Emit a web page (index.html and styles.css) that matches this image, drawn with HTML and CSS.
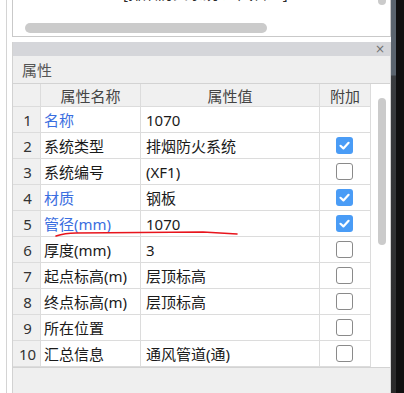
FILE: index.html
```html
<!DOCTYPE html>
<html lang="zh-CN">
<head>
    <meta charset="UTF-8">
    <meta name="viewport" content="width=device-width, initial-scale=1.0">
    <title>属性</title>
    <link rel="stylesheet" href="styles.css">
</head>
<body>
    <div class="screen">
        <div class="gutter"></div>

        <div class="main">
            <div class="top-panel">
                <div class="top-left">
                    <div class="cut-text">[排烟防火系统-通风管道]</div>
                    <div class="hthumb"></div>
                </div>
                <div class="vthumb-top"></div>
            </div>

            <div class="prop-panel">
                <div class="title-bar"><span class="close">×</span></div>
                <div class="prop-label">属性</div>

                <div class="grid-wrap">
                    <div class="grid">
                        <div class="row head">
                            <div class="cell num"></div>
                            <div class="cell center">属性名称</div>
                            <div class="cell center">属性值</div>
                            <div class="cell center">附加</div>
                        </div>
                        <div class="row">
                            <div class="cell num">1</div>
                            <div class="cell name blue">名称</div>
                            <div class="cell val">1070</div>
                            <div class="cell box"></div>
                        </div>
                        <div class="row">
                            <div class="cell num">2</div>
                            <div class="cell name">系统类型</div>
                            <div class="cell val">排烟防火系统</div>
                            <div class="cell box"><span class="check on"><svg viewBox="0 0 17 17"><path d="M4.5 8.8 L7.4 11.4 L12.6 5.8"/></svg></span></div>
                        </div>
                        <div class="row">
                            <div class="cell num">3</div>
                            <div class="cell name">系统编号</div>
                            <div class="cell val">(XF1)</div>
                            <div class="cell box"><span class="check"></span></div>
                        </div>
                        <div class="row">
                            <div class="cell num">4</div>
                            <div class="cell name blue">材质</div>
                            <div class="cell val">钢板</div>
                            <div class="cell box"><span class="check on"><svg viewBox="0 0 17 17"><path d="M4.5 8.8 L7.4 11.4 L12.6 5.8"/></svg></span></div>
                        </div>
                        <div class="row">
                            <div class="cell num">5</div>
                            <div class="cell name blue">管径(mm)</div>
                            <div class="cell val">1070</div>
                            <div class="cell box"><span class="check on"><svg viewBox="0 0 17 17"><path d="M4.5 8.8 L7.4 11.4 L12.6 5.8"/></svg></span></div>
                        </div>
                        <div class="row">
                            <div class="cell num">6</div>
                            <div class="cell name">厚度(mm)</div>
                            <div class="cell val">3</div>
                            <div class="cell box"><span class="check"></span></div>
                        </div>
                        <div class="row">
                            <div class="cell num">7</div>
                            <div class="cell name">起点标高(m)</div>
                            <div class="cell val">层顶标高</div>
                            <div class="cell box"><span class="check"></span></div>
                        </div>
                        <div class="row">
                            <div class="cell num">8</div>
                            <div class="cell name">终点标高(m)</div>
                            <div class="cell val">层顶标高</div>
                            <div class="cell box"><span class="check"></span></div>
                        </div>
                        <div class="row">
                            <div class="cell num">9</div>
                            <div class="cell name">所在位置</div>
                            <div class="cell val"></div>
                            <div class="cell box"><span class="check"></span></div>
                        </div>
                        <div class="row">
                            <div class="cell num">10</div>
                            <div class="cell name">汇总信息</div>
                            <div class="cell val">通风管道(通)</div>
                            <div class="cell box"><span class="check"></span></div>
                        </div>
                    </div>
                    <div class="vscroll"><div class="vthumb"></div></div>
                </div>

                <!-- hand-drawn red underline -->
                <svg class="mark" width="240" height="12" viewBox="0 0 240 12">
                    <path d="M43 7 Q52 4 63 4 L190 3 L224 5"/>
                </svg>
            </div>
        </div>

        <div class="edge">
            <div class="slate"></div>
            <div class="dark"></div>
        </div>
    </div>
</body>
</html>
```

FILE: styles.css
```css
* {
    box-sizing: border-box;
}

body {
    margin: 0;
    background-color: #ffffff;
    font-family: "Noto Sans", "Noto Sans CJK SC", sans-serif;
    font-size: 15px;
    color: #1a1a1a;
}

.screen {
    display: flex;
    width: 404px;
    height: 393px;
    overflow: hidden;
}

.gutter {
    width: 7px;
    margin-right: 5px;
    border-right: 1px solid #d4d4d4;
}

.main {
    width: 379px;
    display: flex;
    flex-direction: column;
}

.top-panel {
    height: 37px;
    display: flex;
    justify-content: space-between;
    background-color: #fff;
    border: 1px solid #c9c9c9;
    border-top: none;
}

.top-left {
    padding-left: 12px;
}

.cut-text {
    margin-top: -15px;
    padding-left: 98px;
    height: 16px;
    line-height: 16px;
    color: #2b2b2b;
    white-space: nowrap;
}

.hthumb {
    width: 242px;
    height: 10px;
    margin-top: 22px;
    border-radius: 5px;
    background-color: #cbcbcb;
}

.vthumb-top {
    width: 8px;
    height: 5px;
    margin-right: 4px;
    border-radius: 0 0 4px 4px;
    background-color: #cbcbcb;
}

.prop-panel {
    position: relative;
    flex: 1;
    margin-top: 5px;
    background-color: #efefef;
    border-left: 1px solid #d2d2d2;
    border-right: 1px solid #d2d2d2;
}

.title-bar {
    height: 14px;
    display: flex;
    justify-content: flex-end;
    align-items: center;
    padding-right: 5px;
    background-color: #d5d6da;
}

.close {
    font-family: "DejaVu Sans", sans-serif;
    font-size: 12px;
    line-height: 12px;
    color: #707070;
}

.prop-label {
    height: 28px;
    padding-left: 9px;
    line-height: 28px;
    font-family: "Noto Sans CJK SC", sans-serif;
    font-size: 15px;
    color: #555;
    border-bottom: 1px solid #d3d3d3;
}

.grid-wrap {
    display: flex;
    background-color: #fff;
    border-bottom: 1px solid #d3d3d3;
}

.grid {
    width: 358px;
}

.row {
    display: grid;
    grid-template-columns: 28px 100px 179px 51px;
    height: 26px;
    border-bottom: 1px solid #dcdcdc;
}

.row.head {
    height: 23px;
    background-color: #f0f0f0;
    color: #444;
}

.cell {
    display: flex;
    align-items: center;
    border-right: 1px solid #dcdcdc;
    white-space: nowrap;
}

.center {
    justify-content: center;
}

.num {
    justify-content: center;
    padding-left: 2px;
    background-color: #f0f0f0;
    color: #333;
}

.name {
    padding-left: 3px;
    font-family: "Noto Sans", "Noto Sans CJK SC", sans-serif;
}

.val {
    padding-left: 5px;
}

.blue {
    color: #3a6ee0;
}

.box {
    justify-content: center;
    padding-right: 2px;
}

.check {
    display: block;
    width: 17px;
    height: 17px;
    border: 1.5px solid #8a8a8a;
    border-radius: 3px;
    background-color: #fff;
}

.check.on {
    border: none;
    background-color: #4a9cf6;
}

.check svg {
    display: block;
    width: 17px;
    height: 17px;
}

.check svg path {
    fill: none;
    stroke: #fff;
    stroke-width: 2.2;
    stroke-linecap: round;
    stroke-linejoin: round;
}

.vscroll {
    width: 19px;
    padding-left: 7px;
    padding-top: 14px;
}

.vthumb {
    width: 8px;
    height: 147px;
    border-radius: 4px;
    background-color: #cbcbcb;
}

.mark {
    position: absolute;
    left: 0;
    top: 187px;
}

.mark path {
    fill: none;
    stroke: #e8141c;
    stroke-width: 1.6;
    stroke-linecap: round;
}

.edge {
    width: 13px;
    display: flex;
}

.slate {
    width: 5px;
    background: linear-gradient(#5a646e 0, #5a646e 75px, #3a3d40 76px, #2a2a2a 100%);
}

.dark {
    flex: 1;
    background-color: #0f0f0f;
}
```
